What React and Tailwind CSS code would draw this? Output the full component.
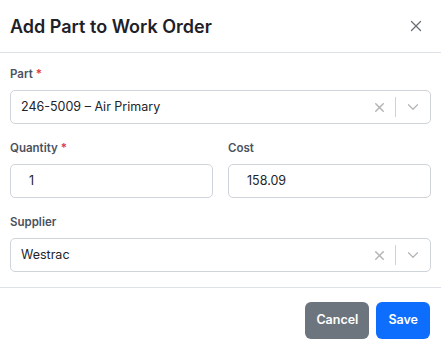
import React from "react";
import { X, ChevronDown } from "lucide-react";

function SelectBox({ value }) {
  return (
    <div className="flex h-[34px] items-center rounded-[5px] border border-[#cfd4da] bg-white">
      <div className="flex-1 pl-[10px] text-[12.5px] text-[#212529]">{value}</div>
      <div className="flex items-center">
        <span className="flex w-[32px] items-center justify-center text-[#b5b5b5]">
          <X className="h-[15px] w-[15px]" strokeWidth={2.4} />
        </span>
        <span className="h-[20px] w-px bg-[#d1d1d1]" />
        <span className="flex w-[34px] items-center justify-center text-[#b5b5b5]">
          <ChevronDown className="h-[18px] w-[18px]" strokeWidth={1.6} />
        </span>
      </div>
    </div>
  );
}

function Label({ children, required }) {
  return (
    <label className="mb-[8px] block h-[16px] text-[11.5px] leading-[16px] font-semibold text-[#4a5260]">
      {children}
      {required && <span className="ml-[3px] text-[#dc3545]">*</span>}
    </label>
  );
}

export default function App() {
  return (
    <div className="w-[441px] h-[349px] bg-white font-['Inter',sans-serif]">
      <div className="flex h-[53px] items-center justify-between border-b border-[#dee2e6] pl-[10px] pr-[16px]">
        <h5 className="text-[18px] font-semibold text-[#1e2128]">Add Part to Work Order</h5>
        <button className="text-[#6b6f74]">
          <X className="h-[18px] w-[18px]" strokeWidth={1.7} />
        </button>
      </div>

      <div className="px-[10px] pt-[13px] pb-[15px]">
        <Label required>Part</Label>
        <SelectBox value="246-5009 – Air Primary" />

        <div className="mt-[16px] grid grid-cols-2 gap-[15px]">
          <div>
            <Label required>Quantity</Label>
            <div className="flex h-[34px] items-center rounded-[5px] border border-[#cfd4da] pl-[18px] text-[12.5px] text-[#212529]">1</div>
          </div>
          <div>
            <Label>Cost</Label>
            <div className="flex h-[34px] items-center rounded-[5px] border border-[#cfd4da] pl-[18px] text-[12.5px] text-[#212529]">158.09</div>
          </div>
        </div>

        <div className="mt-[16px]">
          <Label>Supplier</Label>
          <SelectBox value="Westrac" />
        </div>
      </div>

      <div className="flex justify-end gap-[7px] border-t border-[#dee2e6] px-[11px] pt-[14px]">
        <button className="h-[37px] rounded-[6px] bg-[#6c757d] px-[11px] text-[12.5px] font-semibold text-white">Cancel</button>
        <button className="h-[37px] rounded-[6px] bg-[#0d6efd] px-[12px] text-[12.5px] font-semibold text-white">Save</button>
      </div>
    </div>
  );
}
